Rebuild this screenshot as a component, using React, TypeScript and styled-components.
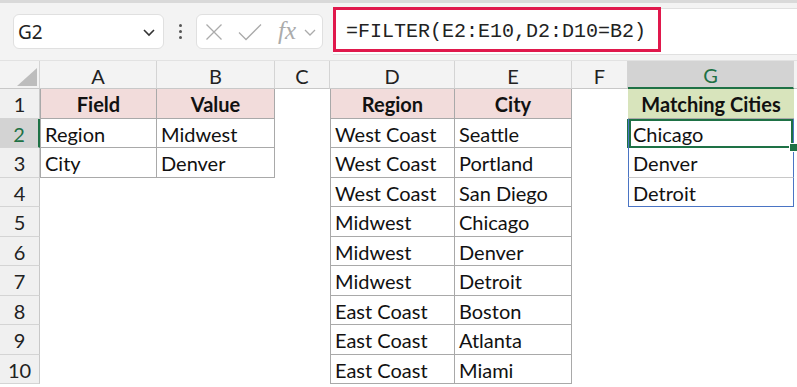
import React from 'react'
import styled, { createGlobalStyle, css } from 'styled-components'

const GlobalStyle = createGlobalStyle`
  html, body { margin: 0; padding: 0; background: #ffffff; }
  body { font-family: Lato, "Liberation Sans", sans-serif; overflow: hidden; }
`

const green = '#1e7145'
const blue = '#4a74c4'
const tableLine = '#a9a9a9'

const columns = ['A', 'B', 'C', 'D', 'E', 'F', 'G']

type Kind = 'empty' | 'head' | 'match' | 'plain' | 'spill'

type CellData = { text?: string; kind: Kind; left?: boolean; last?: boolean; active?: boolean }

const rows: CellData[][] = [
  [
    { text: 'Field', kind: 'head', left: true },
    { text: 'Value', kind: 'head' },
    { kind: 'empty' },
    { text: 'Region', kind: 'head', left: true },
    { text: 'City', kind: 'head' },
    { kind: 'empty' },
    { text: 'Matching Cities', kind: 'match' },
  ],
  [
    { text: 'Region', kind: 'plain', left: true },
    { text: 'Midwest', kind: 'plain' },
    { kind: 'empty' },
    { text: 'West Coast', kind: 'plain', left: true },
    { text: 'Seattle', kind: 'plain' },
    { kind: 'empty' },
    { text: 'Chicago', kind: 'spill', active: true },
  ],
  [
    { text: 'City', kind: 'plain', left: true },
    { text: 'Denver', kind: 'plain' },
    { kind: 'empty' },
    { text: 'West Coast', kind: 'plain', left: true },
    { text: 'Portland', kind: 'plain' },
    { kind: 'empty' },
    { text: 'Denver', kind: 'spill' },
  ],
]

const regionCity: [string, string][] = [
  ['West Coast', 'San Diego'],
  ['Midwest', 'Chicago'],
  ['Midwest', 'Denver'],
  ['Midwest', 'Detroit'],
  ['East Coast', 'Boston'],
  ['East Coast', 'Atlanta'],
  ['East Coast', 'Miami'],
]

regionCity.forEach(([region, city], i) => {
  rows.push([
    { kind: 'empty' },
    { kind: 'empty' },
    { kind: 'empty' },
    { text: region, kind: 'plain', left: true },
    { text: city, kind: 'plain' },
    { kind: 'empty' },
    i === 0 ? { text: 'Detroit', kind: 'spill', last: true } : { kind: 'empty' },
  ])
})

const App = () => {
  return (
    <>
      <GlobalStyle />
      <Window>
        <FormulaBar>
          <NameBox>
            <span>G2</span>
            <Chevron width="14" height="10" viewBox="0 0 14 10">
              <path d="M2 3 L7 8 L12 3" fill="none" stroke="#333" strokeWidth="1.6" />
            </Chevron>
          </NameBox>
          <Dots>
            <i />
            <i />
            <i />
          </Dots>
          <FxBox>
            <ToolIcon width="18" height="18" viewBox="0 0 18 18" gapBefore={0}>
              <path d="M1.5 1.5 L16.5 16.5 M16.5 1.5 L1.5 16.5" stroke="#ababab" strokeWidth="1.3" />
            </ToolIcon>
            <ToolIcon width="24" height="18" viewBox="0 0 24 18" gapBefore={15}>
              <path d="M1 9.5 L8 16.5 L23 1.5" fill="none" stroke="#ababab" strokeWidth="1.3" />
            </ToolIcon>
            <FxLabel>fx</FxLabel>
            <ToolIcon width="12" height="10" viewBox="0 0 12 10" gapBefore={8}>
              <path d="M1 3 L6 8 L11 3" fill="none" stroke="#ababab" strokeWidth="1.3" />
            </ToolIcon>
          </FxBox>
          <FormulaInput>
            <FormulaText>=FILTER(E2:E10,D2:D10=B2)</FormulaText>
            <Highlight />
          </FormulaInput>
        </FormulaBar>

        <Sheet>
          <Corner>
            <svg width="28" height="24" viewBox="0 0 28 24">
              <path d="M26 4 L26 22 L6 22 Z" fill="#bdbdbd" />
            </svg>
          </Corner>
          {columns.map((c) => (
            <ColHead key={c} selected={c === 'G'}>
              {c}
            </ColHead>
          ))}
          <ColHead />

          {rows.map((row, r) => (
            <React.Fragment key={r}>
              <RowHead selected={r === 1}>{r + 1}</RowHead>
              {row.map((cell, c) => (
                <Cell key={c} kind={cell.kind} left={cell.left} last={cell.last} active={cell.active}>
                  {cell.text}
                  {cell.active && <FillHandle />}
                </Cell>
              ))}
              <Cell kind="empty" />
            </React.Fragment>
          ))}
        </Sheet>
      </Window>
    </>
  )
}

const Window = styled.div`
  width: 797px;
  height: 387px;
  overflow: hidden;
  display: flex;
  flex-direction: column;
`

const FormulaBar = styled.div`
  height: 61px;
  box-sizing: border-box;
  background: #f3f3f3;
  border-top: 3px solid #d9d9d9;
  border-bottom: 1px solid #e2e2e2;
  display: flex;
  align-items: center;
  padding: 0 0 0 13px;
`

const NameBox = styled.div`
  width: 151px;
  height: 35px;
  box-sizing: border-box;
  background: #ffffff;
  border: 1px solid #e0e0e0;
  border-radius: 6px;
  display: flex;
  align-items: center;
  justify-content: space-between;
  padding: 0 7px 0 4px;
  font-family: "Noto Sans", "Open Sans", sans-serif;
  font-size: 19px;
  color: #222;
`

const Chevron = styled.svg`
  display: block;
`

const Dots = styled.div`
  width: 32px;
  display: flex;
  flex-direction: column;
  align-items: center;
  gap: 3px;

  i {
    width: 3px;
    height: 3px;
    border-radius: 50%;
    background: #555;
  }
`

const FxBox = styled.div`
  width: 127px;
  height: 35px;
  box-sizing: border-box;
  background: #ffffff;
  border: 1px solid #e0e0e0;
  border-radius: 6px;
  display: flex;
  align-items: center;
  padding: 0 0 0 8px;
`

const ToolIcon = styled.svg<{ gapBefore: number }>`
  display: block;
  flex: none;
  margin-left: ${(p) => p.gapBefore}px;
`

const FxLabel = styled.span`
  font-family: "Liberation Serif", serif;
  font-style: italic;
  font-size: 25px;
  line-height: 1;
  color: #ababab;
  margin-left: 16px;
  margin-bottom: 3px;
`

const FormulaInput = styled.div`
  position: relative;
  flex: 1;
  margin-left: 10px;
  height: 47px;
  box-sizing: border-box;
  background: #ffffff;
  border-top: 1px solid #e0e0e0;
  border-bottom: 1px solid #e0e0e0;
  display: flex;
  align-items: center;
  padding-left: 13px;
`

const FormulaText = styled.span`
  font-family: "Liberation Mono", "DejaVu Sans Mono", monospace;
  font-size: 20px;
  color: #222;
`

const Highlight = styled.div`
  position: absolute;
  left: 0;
  top: -2px;
  width: 328px;
  height: 45px;
  border: 3px solid #e0184c;
  box-sizing: border-box;
`

const Sheet = styled.div`
  display: grid;
  grid-template-columns: 40px 117px 118px 55px 125px 117px 56px 166px 1fr;
  grid-template-rows: 28px repeat(10, 29.5px);
  font-family: Lato, "Liberation Sans", sans-serif;
`

const Corner = styled.div`
  background: #f3f3f3;
  border-right: 1px solid #d4d4d4;
  border-bottom: 1px solid #c8c8c8;
  display: flex;
  align-items: flex-end;
  justify-content: flex-end;
  box-sizing: border-box;
`

const ColHead = styled.div<{ selected?: boolean }>`
  box-sizing: border-box;
  background: ${(p) => (p.selected ? '#d3d3d3' : '#f3f3f3')};
  color: ${(p) => (p.selected ? green : '#222')};
  border-right: 1px solid #d4d4d4;
  border-bottom: ${(p) => (p.selected ? `2px solid ${green}` : '1px solid #c8c8c8')};
  display: flex;
  align-items: center;
  justify-content: center;
  font-size: 20px;
  padding-top: 2px;
`

const RowHead = styled.div<{ selected?: boolean }>`
  box-sizing: border-box;
  background: ${(p) => (p.selected ? '#d3d3d3' : '#f0f0f0')};
  color: ${(p) => (p.selected ? green : '#222')};
  border-right: ${(p) => (p.selected ? `2px solid ${green}` : '1px solid #c8c8c8')};
  border-bottom: 1px solid #d4d4d4;
  display: flex;
  align-items: center;
  justify-content: center;
  font-size: 20px;
  padding-top: 2px;
`

const Cell = styled.div<{ kind: Kind; left?: boolean; last?: boolean; active?: boolean }>`
  position: relative;
  box-sizing: border-box;
  display: flex;
  align-items: center;
  padding: 2px 4px 0;
  font-size: 20px;
  color: #111;
  white-space: nowrap;

  ${(p) =>
    (p.kind === 'plain' || p.kind === 'head') &&
    css`
      border-right: 1px solid ${tableLine};
      border-bottom: 1px solid ${tableLine};
      border-left: ${p.left ? `1px solid ${tableLine}` : 'none'};
    `}

  ${(p) =>
    p.kind === 'head' &&
    css`
      background: #f2dcdb;
      font-weight: 700;
      justify-content: center;
    `}

  ${(p) =>
    p.kind === 'match' &&
    css`
      background: #d8e4bc;
      font-weight: 700;
      justify-content: center;
      border-bottom: 1px solid ${tableLine};
    `}

  ${(p) =>
    p.kind === 'spill' &&
    css`
      border-left: 1px solid ${blue};
      border-right: 1px solid ${blue};
      border-bottom: 1px solid ${p.last ? blue : '#c8c8c8'};
    `}

  ${(p) =>
    p.active &&
    css`
      box-shadow: inset 0 0 0 2px ${green}, -1px 0 0 0 ${green};
      border-bottom: none;
    `}
`

const FillHandle = styled.span`
  position: absolute;
  right: -5px;
  bottom: -4px;
  width: 7px;
  height: 7px;
  background: ${green};
  border: 1px solid #ffffff;
  z-index: 2;
`

export default App
